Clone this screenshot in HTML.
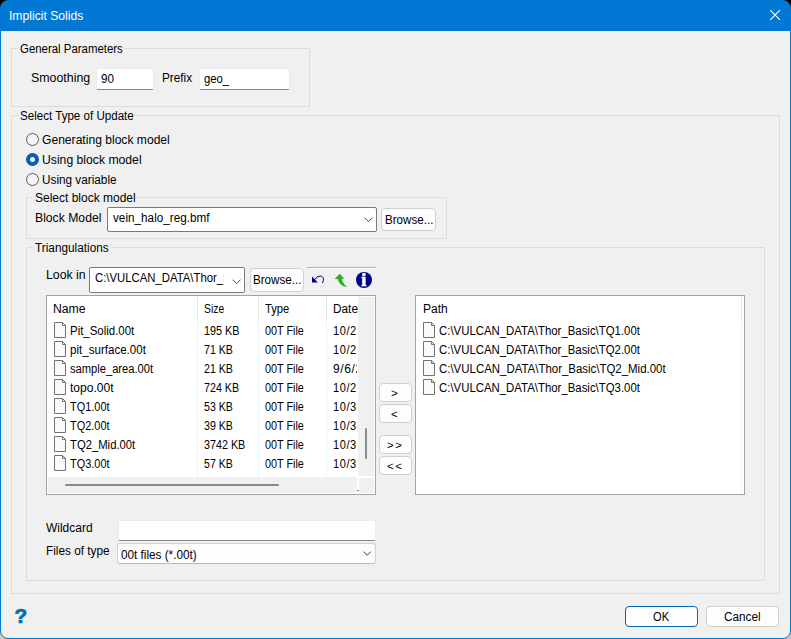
<!DOCTYPE html>
<html>
<head>
<meta charset="utf-8">
<title>Implicit Solids</title>
<style>
html,body{margin:0;padding:0;}
body{width:791px;height:639px;overflow:hidden;position:relative;background:#c9c9c9;font:12px/14px "Liberation Sans",sans-serif;color:#000;}
.corner-top{position:absolute;left:0;top:0;width:791px;height:20px;background:#000;}
.win{position:absolute;left:0;top:0;width:789px;height:637px;border:1px solid #0078d4;border-radius:8px;background:linear-gradient(#0078d4 0,#0078d4 30px,#f0f0f0 30px);overflow:hidden;}
.title{position:absolute;left:0;top:0;width:789px;height:30px;background:#0078d4;}
.abs{position:absolute;box-sizing:border-box;}
.gb{position:absolute;box-sizing:border-box;border:1px solid #dcdcdc;}
.lblbg{position:absolute;background:#f0f0f0;height:3px;}
.t{position:absolute;white-space:pre;line-height:14px;transform-origin:0 50%;display:block;}
.clip{position:absolute;height:14px;overflow:hidden;}
.edit{position:absolute;box-sizing:border-box;background:#fff;border:1px solid #ececec;border-bottom:1px solid #868686;border-radius:2px;}
.combo{position:absolute;box-sizing:border-box;background:#fff;border:1px solid #7a7a7a;border-radius:2px;}
.btn{position:absolute;box-sizing:border-box;background:#fdfdfd;border:1px solid #d0d0d0;border-radius:4px;}
.list{position:absolute;box-sizing:border-box;background:#fff;border:1px solid #a0a3ab;}
.radio{position:absolute;box-sizing:border-box;width:13px;height:13px;border-radius:50%;border:1px solid #5a5a5a;background:#f5f5f5;}
.radio.on{border:4px solid #005fb8;background:#fff;}
svg{position:absolute;overflow:visible;}
</style>
</head>
<body>
<div class="corner-top"></div>
<div class="win">
</div>
<!-- everything below positioned in page coordinates -->
<svg style="left:770px;top:10px" width="11" height="11" viewBox="0 0 11 11"><path d="M0.2 0.2 L9.9 9.9 M9.9 0.2 L0.2 9.9" stroke="#fff" stroke-width="1.1" fill="none"/></svg>

<!-- group boxes -->
<div class="gb" style="left:11px;top:48px;width:299px;height:59px"></div>
<div class="lblbg" style="left:18px;top:47px;width:106px"></div>
<div class="gb" style="left:11px;top:115px;width:769px;height:479px"></div>
<div class="lblbg" style="left:18px;top:114px;width:117px"></div>
<div class="gb" style="left:26px;top:197px;width:421px;height:42px"></div>
<div class="lblbg" style="left:33px;top:196px;width:104px"></div>
<div class="gb" style="left:26px;top:247px;width:739px;height:334px"></div>
<div class="lblbg" style="left:33px;top:246px;width:78px"></div>

<!-- edits -->
<div class="edit" style="left:96px;top:68px;width:58px;height:22px"></div>
<div class="edit" style="left:199px;top:68px;width:91px;height:22px"></div>
<div class="edit" style="left:118px;top:520px;width:258px;height:21px"></div>

<!-- radios -->
<div class="radio" style="left:26px;top:133px"></div>
<div class="radio on" style="left:26px;top:153px"></div>
<div class="radio" style="left:26px;top:173px"></div>

<!-- combos -->
<div class="combo" style="left:107px;top:207px;width:270px;height:25px"></div>
<svg style="left:364px;top:217px" width="9" height="6" viewBox="0 0 9 6"><path d="M0.5 0.7 L4.5 4.7 L8.5 0.7" stroke="#444" stroke-width="1" fill="none"/></svg>
<div class="combo" style="left:89px;top:267px;width:156px;height:26px"></div>
<svg style="left:231.5px;top:278.5px" width="9" height="6" viewBox="0 0 9 6"><path d="M0.5 0.7 L4.5 4.7 L8.5 0.7" stroke="#444" stroke-width="1" fill="none"/></svg>
<div class="btn" style="left:117px;top:543px;width:259px;height:21px;border-radius:3px;border-bottom-color:#b8b8b8"></div>
<svg style="left:363px;top:551.2px" width="9" height="6" viewBox="0 0 9 6"><path d="M0.4 0.6 L4.1 4.3 L7.8 0.6" stroke="#444" stroke-width="1" fill="none"/></svg>

<!-- buttons -->
<div class="btn" style="left:381px;top:208px;width:55px;height:23px"></div>
<div class="btn" style="left:250px;top:268px;width:54px;height:24px"></div>
<div class="btn" style="left:379px;top:383px;width:33px;height:19px"></div>
<div class="btn" style="left:379px;top:404px;width:33px;height:19px"></div>
<div class="btn" style="left:379px;top:435px;width:33px;height:19px"></div>
<div class="btn" style="left:379px;top:456px;width:33px;height:19px"></div>
<div class="btn" style="left:625px;top:606px;width:73px;height:21px;border-color:#0067c0"></div>
<div class="btn" style="left:706px;top:606px;width:73px;height:21px"></div>

<!-- toolbar line + icons -->
<div class="abs" style="left:307px;top:267px;width:69px;height:1px;background:#b0b0b0"></div>
<div class="abs" style="left:307px;top:268px;width:69px;height:1px;background:#fff"></div>
<svg style="left:306px;top:266px" width="72" height="28" viewBox="306 266 72 28">
<path d="M312 276.6 V282.5 H317.8 Z" fill="#000080"/>
<path d="M314.6 279.8 Q317 275.6 320.6 276 Q324.2 277 323.3 280.6 L322.5 283" fill="none" stroke="#000080" stroke-width="1"/>
<path d="M339.7 273.8 L344.5 278.7 L341.9 278.7 Q342.6 283.6 347.2 286.9 Q339.8 286.6 337.6 279 L334.6 279.1 Z" fill="#22b422"/>
<circle cx="364" cy="280" r="8" fill="#000080"/>
<text x="363.8" y="285.6" text-anchor="middle" font-family="Liberation Serif, serif" font-weight="bold" font-size="18" fill="#fff" stroke="#fff" stroke-width="0.7">i</text>
</svg>
<svg style="left:8px;top:603px" width="28" height="26" viewBox="8 603 28 26">
<text x="0" y="623" transform="translate(14.5 0) scale(1.08 1)" font-family="Liberation Sans, sans-serif" font-weight="bold" font-size="19.3" fill="#0a6ca8" stroke="#0a6ca8" stroke-width="0.7">?</text>
</svg>

<!-- lists -->
<div class="list" style="left:46px;top:295px;width:330px;height:200px"></div>
<div class="list" style="left:415px;top:295px;width:330px;height:200px"></div>
<div class="abs" style="left:358px;top:297px;width:16px;height:179px;background:#f0f0f0"></div>
<div class="abs" style="left:365px;top:428px;width:2px;height:31px;background:#8b8b8b;border-radius:1px"></div>
<div class="abs" style="left:48px;top:477px;width:309px;height:16px;background:#f0f0f0"></div>
<div class="abs" style="left:359px;top:478px;width:15px;height:15px;background:#f0f0f0"></div>
<div class="abs" style="left:65px;top:484px;width:214px;height:2px;background:#8b8b8b;border-radius:1px"></div>
<div class="abs" style="left:357px;top:490px;width:2px;height:1px;background:#777"></div>
<div class="abs" style="left:197px;top:297px;width:1px;height:24px;background:#e4e4e4"></div>
<div class="abs" style="left:197px;top:321px;width:1px;height:156px;background:#ebf3fc"></div>
<div class="abs" style="left:258px;top:297px;width:1px;height:24px;background:#e4e4e4"></div>
<div class="abs" style="left:258px;top:321px;width:1px;height:156px;background:#ebf3fc"></div>
<div class="abs" style="left:326px;top:297px;width:1px;height:24px;background:#e4e4e4"></div>
<div class="abs" style="left:326px;top:321px;width:1px;height:156px;background:#ebf3fc"></div>
<div class="abs" style="left:741px;top:297px;width:1px;height:24px;background:#e4e4e4"></div>
<div class="abs" style="left:741px;top:321px;width:1px;height:172px;background:#ebf3fc"></div>
<svg style="left:54px;top:322px" width="12" height="16" viewBox="0 0 12 16"><path d="M0.5 0.5 H8.5 L11.5 3.5 V15.5 H0.5 Z" fill="#fafafa" stroke="#74716e" stroke-width="1"/><path d="M8.5 0.5 V3.5 H11.5" fill="none" stroke="#74716e" stroke-width="1"/></svg>
<svg style="left:54px;top:341px" width="12" height="16" viewBox="0 0 12 16"><path d="M0.5 0.5 H8.5 L11.5 3.5 V15.5 H0.5 Z" fill="#fafafa" stroke="#74716e" stroke-width="1"/><path d="M8.5 0.5 V3.5 H11.5" fill="none" stroke="#74716e" stroke-width="1"/></svg>
<svg style="left:54px;top:360px" width="12" height="16" viewBox="0 0 12 16"><path d="M0.5 0.5 H8.5 L11.5 3.5 V15.5 H0.5 Z" fill="#fafafa" stroke="#74716e" stroke-width="1"/><path d="M8.5 0.5 V3.5 H11.5" fill="none" stroke="#74716e" stroke-width="1"/></svg>
<svg style="left:54px;top:379px" width="12" height="16" viewBox="0 0 12 16"><path d="M0.5 0.5 H8.5 L11.5 3.5 V15.5 H0.5 Z" fill="#fafafa" stroke="#74716e" stroke-width="1"/><path d="M8.5 0.5 V3.5 H11.5" fill="none" stroke="#74716e" stroke-width="1"/></svg>
<svg style="left:54px;top:398px" width="12" height="16" viewBox="0 0 12 16"><path d="M0.5 0.5 H8.5 L11.5 3.5 V15.5 H0.5 Z" fill="#fafafa" stroke="#74716e" stroke-width="1"/><path d="M8.5 0.5 V3.5 H11.5" fill="none" stroke="#74716e" stroke-width="1"/></svg>
<svg style="left:54px;top:417px" width="12" height="16" viewBox="0 0 12 16"><path d="M0.5 0.5 H8.5 L11.5 3.5 V15.5 H0.5 Z" fill="#fafafa" stroke="#74716e" stroke-width="1"/><path d="M8.5 0.5 V3.5 H11.5" fill="none" stroke="#74716e" stroke-width="1"/></svg>
<svg style="left:54px;top:436px" width="12" height="16" viewBox="0 0 12 16"><path d="M0.5 0.5 H8.5 L11.5 3.5 V15.5 H0.5 Z" fill="#fafafa" stroke="#74716e" stroke-width="1"/><path d="M8.5 0.5 V3.5 H11.5" fill="none" stroke="#74716e" stroke-width="1"/></svg>
<svg style="left:54px;top:455px" width="12" height="16" viewBox="0 0 12 16"><path d="M0.5 0.5 H8.5 L11.5 3.5 V15.5 H0.5 Z" fill="#fafafa" stroke="#74716e" stroke-width="1"/><path d="M8.5 0.5 V3.5 H11.5" fill="none" stroke="#74716e" stroke-width="1"/></svg>
<svg style="left:423px;top:322px" width="12" height="16" viewBox="0 0 12 16"><path d="M0.5 0.5 H8.5 L11.5 3.5 V15.5 H0.5 Z" fill="#fafafa" stroke="#74716e" stroke-width="1"/><path d="M8.5 0.5 V3.5 H11.5" fill="none" stroke="#74716e" stroke-width="1"/></svg>
<svg style="left:423px;top:341px" width="12" height="16" viewBox="0 0 12 16"><path d="M0.5 0.5 H8.5 L11.5 3.5 V15.5 H0.5 Z" fill="#fafafa" stroke="#74716e" stroke-width="1"/><path d="M8.5 0.5 V3.5 H11.5" fill="none" stroke="#74716e" stroke-width="1"/></svg>
<svg style="left:423px;top:360px" width="12" height="16" viewBox="0 0 12 16"><path d="M0.5 0.5 H8.5 L11.5 3.5 V15.5 H0.5 Z" fill="#fafafa" stroke="#74716e" stroke-width="1"/><path d="M8.5 0.5 V3.5 H11.5" fill="none" stroke="#74716e" stroke-width="1"/></svg>
<svg style="left:423px;top:379px" width="12" height="16" viewBox="0 0 12 16"><path d="M0.5 0.5 H8.5 L11.5 3.5 V15.5 H0.5 Z" fill="#fafafa" stroke="#74716e" stroke-width="1"/><path d="M8.5 0.5 V3.5 H11.5" fill="none" stroke="#74716e" stroke-width="1"/></svg>

<span class="t" style="left:8.59px;top:9px;transform:scaleX(1.0118);color:#fff;">Implicit Solids</span>
<span class="t" style="left:19.63px;top:42px;transform:scaleX(0.9510);">General Parameters</span>
<span class="t" style="left:30.88px;top:71px;transform:scaleX(1.0322);">Smoothing</span>
<span class="t" style="left:100.61px;top:72px;transform:scaleX(0.9700);">90</span>
<span class="t" style="left:162.32px;top:71px;transform:scaleX(0.9807);">Prefix</span>
<span class="t" style="left:203.73px;top:72px;transform:scaleX(0.9424);">geo_</span>
<span class="t" style="left:19.72px;top:109px;transform:scaleX(0.9650);">Select Type of Update</span>
<span class="t" style="left:41.60px;top:133px;transform:scaleX(1.0082);">Generating block model</span>
<span class="t" style="left:41.89px;top:153px;transform:scaleX(1.0158);">Using block model</span>
<span class="t" style="left:41.92px;top:173px;transform:scaleX(0.9804);">Using variable</span>
<span class="t" style="left:34.80px;top:191px;transform:scaleX(0.9995);">Select block model</span>
<span class="t" style="left:35.39px;top:211px;transform:scaleX(1.0158);">Block Model</span>
<span class="t" style="left:112.80px;top:211px;transform:scaleX(0.9788);">vein_halo_reg.bmf</span>
<span class="t" style="left:384.53px;top:213px;transform:scaleX(0.9671);">Browse...</span>
<span class="t" style="left:35.30px;top:241px;transform:scaleX(0.9835);">Triangulations</span>
<span class="t" style="left:45.78px;top:268px;transform:scaleX(1.0237);">Look in</span>
<div class="clip" style="left:94.80px;top:271px;width:129.4px"><span class="t" style="left:0.43px;top:0;transform:scaleX(0.9450);">C:\VULCAN_DATA\Thor_Basic</span></div>
<span class="t" style="left:252.73px;top:273px;transform:scaleX(0.9671);">Browse...</span>
<span class="t" style="left:53.48px;top:302px;transform:scaleX(1.0184);">Name</span>
<span class="t" style="left:204.17px;top:302px;transform:scaleX(0.8628);">Size</span>
<span class="t" style="left:265.21px;top:302px;transform:scaleX(0.9352);">Type</span>
<div class="clip" style="left:332.50px;top:302px;width:25.0px"><span class="t" style="left:0.11px;top:0;transform:scaleX(0.9850);">Date</span></div>
<span class="t" style="left:69.84px;top:324px;transform:scaleX(0.9542);">Pit_Solid.00t</span>
<span class="t" style="left:203.79px;top:324px;transform:scaleX(0.8981);">195 KB</span>
<span class="t" style="left:264.84px;top:324px;transform:scaleX(0.9017);">00T File</span>
<div class="clip" style="left:332.50px;top:324px;width:24.9px"><span class="t" style="left:0.17px;top:0;transform:scaleX(0.9200);letter-spacing:0.6px;">10/29/2019</span></div>
<span class="t" style="left:70.02px;top:343px;transform:scaleX(0.9643);">pit_surface.00t</span>
<span class="t" style="left:204.07px;top:343px;transform:scaleX(0.8861);">71 KB</span>
<span class="t" style="left:264.84px;top:343px;transform:scaleX(0.9017);">00T File</span>
<div class="clip" style="left:332.50px;top:343px;width:24.9px"><span class="t" style="left:0.17px;top:0;transform:scaleX(0.9200);letter-spacing:0.6px;">10/22/2019</span></div>
<span class="t" style="left:70.42px;top:362px;transform:scaleX(0.9297);">sample_area.00t</span>
<span class="t" style="left:204.07px;top:362px;transform:scaleX(0.8861);">21 KB</span>
<span class="t" style="left:264.84px;top:362px;transform:scaleX(0.9017);">00T File</span>
<div class="clip" style="left:332.50px;top:362px;width:24.9px"><span class="t" style="left:0.50px;top:0;transform:scaleX(1.0000);letter-spacing:0.6px;">9/6/2019</span></div>
<span class="t" style="left:69.90px;top:381px;transform:scaleX(1.0038);">topo.00t</span>
<span class="t" style="left:204.07px;top:381px;transform:scaleX(0.8910);">724 KB</span>
<span class="t" style="left:264.84px;top:381px;transform:scaleX(0.9017);">00T File</span>
<div class="clip" style="left:332.50px;top:381px;width:24.9px"><span class="t" style="left:0.17px;top:0;transform:scaleX(0.9200);letter-spacing:0.6px;">10/22/2019</span></div>
<span class="t" style="left:70.22px;top:400px;transform:scaleX(0.9114);">TQ1.00t</span>
<span class="t" style="left:204.25px;top:400px;transform:scaleX(0.8805);">53 KB</span>
<span class="t" style="left:264.84px;top:400px;transform:scaleX(0.9017);">00T File</span>
<div class="clip" style="left:332.50px;top:400px;width:24.9px"><span class="t" style="left:0.17px;top:0;transform:scaleX(0.9200);letter-spacing:0.6px;">10/30/2019</span></div>
<span class="t" style="left:70.22px;top:419px;transform:scaleX(0.9114);">TQ2.00t</span>
<span class="t" style="left:204.25px;top:419px;transform:scaleX(0.8805);">39 KB</span>
<span class="t" style="left:264.84px;top:419px;transform:scaleX(0.9017);">00T File</span>
<div class="clip" style="left:332.50px;top:419px;width:24.9px"><span class="t" style="left:0.17px;top:0;transform:scaleX(0.9200);letter-spacing:0.6px;">10/30/2019</span></div>
<span class="t" style="left:70.21px;top:438px;transform:scaleX(0.9403);">TQ2_Mid.00t</span>
<span class="t" style="left:204.24px;top:438px;transform:scaleX(0.8971);">3742 KB</span>
<span class="t" style="left:264.84px;top:438px;transform:scaleX(0.9017);">00T File</span>
<div class="clip" style="left:332.50px;top:438px;width:24.9px"><span class="t" style="left:0.17px;top:0;transform:scaleX(0.9200);letter-spacing:0.6px;">10/30/2019</span></div>
<span class="t" style="left:70.22px;top:457px;transform:scaleX(0.9114);">TQ3.00t</span>
<span class="t" style="left:204.25px;top:457px;transform:scaleX(0.8805);">57 KB</span>
<span class="t" style="left:264.84px;top:457px;transform:scaleX(0.9017);">00T File</span>
<div class="clip" style="left:332.50px;top:457px;width:24.9px"><span class="t" style="left:0.17px;top:0;transform:scaleX(0.9200);letter-spacing:0.6px;">10/30/2019</span></div>
<span class="t" style="left:422.50px;top:302px;transform:scaleX(0.9995);">Path</span>
<span class="t" style="left:439.13px;top:324px;transform:scaleX(0.9493);">C:\VULCAN_DATA\Thor_Basic\TQ1.00t</span>
<span class="t" style="left:439.13px;top:343px;transform:scaleX(0.9493);">C:\VULCAN_DATA\Thor_Basic\TQ2.00t</span>
<span class="t" style="left:439.13px;top:362px;transform:scaleX(0.9536);">C:\VULCAN_DATA\Thor_Basic\TQ2_Mid.00t</span>
<span class="t" style="left:439.13px;top:381px;transform:scaleX(0.9493);">C:\VULCAN_DATA\Thor_Basic\TQ3.00t</span>
<span class="t" style="left:46.40px;top:521px;transform:scaleX(0.9978);">Wildcard</span>
<span class="t" style="left:45.71px;top:544px;transform:scaleX(0.9839);">Files of type</span>
<span class="t" style="left:120.91px;top:548px;transform:scaleX(0.9781);">00t files (*.00t)</span>
<span class="t" style="left:653.14px;top:610px;transform:scaleX(0.9263);">OK</span>
<span class="t" style="left:723.81px;top:610px;transform:scaleX(0.9781);">Cancel</span>
<span class="t" style="left:391.17px;top:386px;transform:scaleX(1.0556);font-size:11px;">&gt;</span>
<span class="t" style="left:391.28px;top:407px;transform:scaleX(1.0370);font-size:11px;">&lt;</span>
<span class="t" style="left:387.13px;top:438px;transform:scaleX(1.0317);font-size:11px;letter-spacing:1.6px;">&gt;&gt;</span>
<span class="t" style="left:387.13px;top:459px;transform:scaleX(1.0317);font-size:11px;letter-spacing:1.6px;">&lt;&lt;</span>
</body>
</html>
